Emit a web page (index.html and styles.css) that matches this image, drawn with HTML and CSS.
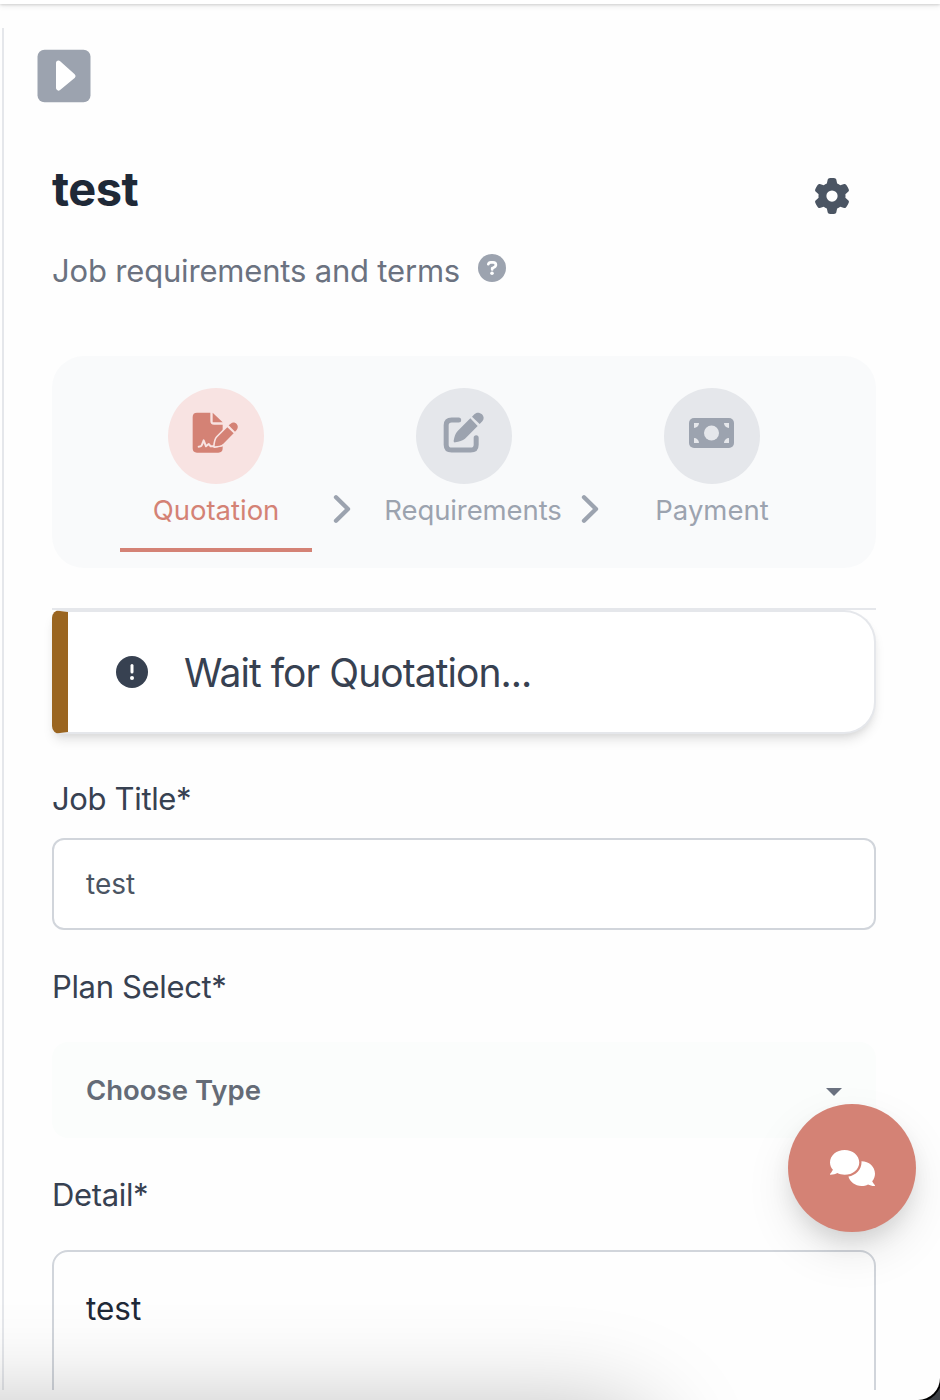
FILE: index.html
```html
<!DOCTYPE html>
<html lang="en">
<head>
<meta charset="utf-8">
<title>Job</title>
<link rel="stylesheet" href="styles.css">
</head>
<body>
<div class="window">
  <header class="topbar"></header>
  <main class="panel">
    <button class="toggle" aria-label="Open sidebar">
      <svg width="54" height="54" viewBox="0 0 54 54"><rect x=".5" y=".7" width="53" height="52.500" rx="7" fill="#9ca3af"/><path d="M21.500 14L36 27L21.500 39Z" fill="#fff" stroke="#fff" stroke-width="5" stroke-linejoin="round"/></svg>
    </button>
    <div class="content">
      <div class="heading">
        <h1 class="title">test</h1>
        <svg class="gear" width="36" height="36" viewBox="0 0 512 512"><path fill="#4b5563" d="M495.900 166.600c3.200 8.700 .5 18.400-6.400 24.600l-43.300 39.400c1.100 8.300 1.700 16.800 1.700 25.400s-.6 17.100-1.700 25.400l43.300 39.400c6.900 6.200 9.600 15.900 6.400 24.600c-4.400 11.900-9.700 23.300-15.800 34.300l-4.700 8.100c-6.600 11-14 21.400-22.100 31.200c-5.900 7.200-15.700 9.600-24.500 6.800l-55.700-17.700c-13.400 10.300-28.200 18.900-44 25.400l-12.500 57.100c-2 9.100-9 16.300-18.200 17.800c-13.800 2.300-28 3.500-42.500 3.500s-28.700-1.200-42.500-3.500c-9.200-1.500-16.200-8.700-18.200-17.800l-12.500-57.100c-15.800-6.500-30.600-15.100-44-25.400L83.100 425.900c-8.800 2.800-18.600 .3-24.500-6.800c-8.100-9.800-15.500-20.200-22.100-31.200l-4.700-8.100c-6.100-11-11.400-22.400-15.800-34.300c-3.200-8.700-.5-18.400 6.400-24.600l43.300-39.400C64.600 273.100 64 264.600 64 256s.6-17.100 1.700-25.400L22.400 191.200c-6.900-6.200-9.600-15.900-6.400-24.600c4.400-11.900 9.700-23.300 15.800-34.300l4.700-8.100c6.600-11 14-21.400 22.100-31.200c5.900-7.200 15.700-9.600 24.500-6.800l55.700 17.700c13.400-10.300 28.200-18.900 44-25.400l12.500-57.100c2-9.100 9-16.300 18.200-17.800C227.300 1.200 241.500 0 256 0s28.700 1.200 42.500 3.500c9.200 1.500 16.200 8.700 18.200 17.800l12.500 57.100c15.800 6.500 30.600 15.100 44 25.400l55.700-17.700c8.800-2.800 18.600-.3 24.500 6.800c8.100 9.800 15.500 20.200 22.100 31.200l4.700 8.100c6.100 11 11.400 22.400 15.800 34.300zM256 336a80 80 0 1 0 0-160 80 80 0 1 0 0 160z"/></svg>
      </div>
      <div class="subtitle">
        <span class="subtitle-text">Job requirements and terms</span>
        <svg width="28" height="28" viewBox="0 0 28 28"><circle cx="14" cy="14" r="14" fill="#9ca3af"/><path d="M10.300 10.200C10.600 8.900 11.600 8.300 12.800 8.300H15C16.700 8.300 17.900 9.300 17.900 10.900C17.900 12.600 16.200 13.200 14.200 14.300V15.400" fill="none" stroke="#fff" stroke-width="2.700" stroke-linecap="round" stroke-linejoin="round"/><circle cx="14" cy="19.300" r="1.800" fill="#fff"/></svg>
      </div>

      <nav class="steps">
        <div class="step active">
          <span class="disc">
            <svg width="48" height="42" viewBox="247 127 144 126"><path fill="#d48275" d="M262 129H302V154Q302 165 313 165H339V236Q339 249 326 249H262Q249 249 249 236V142Q249 129 262 129ZM309 129L339 158H309Z"/><path fill="none" stroke="#f8e3e2" stroke-width="6" stroke-linejoin="round" stroke-linecap="round" d="M267 231C277 231 276 227 282 212L289 230L297 223L303 230H321L341 227"/><path fill="#d48275" stroke="#f8e3e2" stroke-width="10" stroke-linejoin="round" paint-order="stroke" d="M353 173L323 203C318 208 316 219 315 230C326 228 334 229 341 222L372 191Z"/><path fill="#d48275" d="M357 167L363 162C368 157 376 157 381 163C386 168 385 176 381 181L376 186Z"/></svg>
          </span>
          <span class="name">Quotation</span>
        </div>
        <svg class="chevron" width="20" height="32" viewBox="0 0 20 32"><path d="M4 4.200L16 16L4 27.800" fill="none" stroke="#9ca3af" stroke-width="4.300" stroke-linecap="round" stroke-linejoin="round"/></svg>
        <div class="step">
          <span class="disc">
            <svg class="edit" width="42" height="42" viewBox="220 127 126 126"><path fill="none" stroke="#9ca3af" stroke-width="15" stroke-linecap="round" d="M267 151H246Q229.500 151 229.500 167V225Q229.500 241 246 241H303Q319.500 241 319.500 225V204"/><path fill="#9ca3af" d="M302 146L264 184C257 191 254 202 252 213Q251 219 257 218C268 216 279 213 286 207L324 169ZM307 141L314 134C320 127 330 128 337 134C343 140 344 149 338 155L330 163Z"/></svg>
          </span>
          <span class="name wide">Requirements</span>
        </div>
        <svg class="chevron" width="20" height="32" viewBox="0 0 20 32"><path d="M4 4.200L16 16L4 27.800" fill="none" stroke="#9ca3af" stroke-width="4.300" stroke-linecap="round" stroke-linejoin="round"/></svg>
        <div class="step">
          <span class="disc">
            <svg class="bill" width="45" height="30" viewBox="0 0 45 30"><rect width="45" height="30" rx="5" fill="#9ca3af"/><circle cx="22.500" cy="15" r="7.500" fill="#e5e7eb"/><path fill="#e5e7eb" d="M5 5H10A5 5 0 0 1 5 10ZM40 5V10A5 5 0 0 1 35 5ZM5 25V20A5 5 0 0 1 10 25ZM40 25H35A5 5 0 0 1 40 20Z"/></svg>
          </span>
          <span class="name">Payment</span>
        </div>
      </nav>

      <section class="notice-wrap">
        <div class="notice">
          <svg width="32" height="32" viewBox="0 0 32 32"><circle cx="16" cy="16" r="16" fill="#374151"/><path d="M16 9.500V16" stroke="#fff" stroke-width="3" stroke-linecap="round"/><circle cx="16" cy="22" r="2" fill="#fff"/></svg>
          <span class="notice-text">Wait for Quotation...</span>
        </div>
      </section>

      <form class="form">
        <label class="label">Job Title*</label>
        <div class="input">test</div>
        <label class="label next">Plan Select*</label>
        <div class="select"><span>Choose Type</span><svg class="caret" width="16" height="8" viewBox="0 0 16 8"><path d="M0 0H16L8 8Z" fill="#6b7280"/></svg></div>
        <label class="label next">Detail*</label>
        <div class="textarea">test</div>
      </form>
    </div>
  </main>
  <button class="chat" aria-label="Chat"><svg width="45" height="36" viewBox="0 0 640 512"><path fill="#fff" d="M416 176C416 78.800 322.900 0 208 0S0 78.800 0 176c0 39.570 15.620 75.960 41.670 105.400c-16.390 32.760-39.230 57.320-39.590 57.680c-2.100 2.205-2.670 5.475-1.441 8.354C1.900 350.300 4.602 352 7.660 352c38.350 0 70.760-11.120 95.740-24.040C134.200 343.100 169.800 352 208 352C322.900 352 416 273.200 416 176zM599.600 443.700C624.800 413.900 640 376.600 640 336C640 238.800 554 160 448 160c-.3145 0-.6191 .041-.9336 .043C447.500 165.300 448 170.600 448 176c0 98.620-79.680 181.200-186.100 202.500C282.700 455.100 357.100 512 448 512c33.690 0 65.320-8.008 92.850-21.980C565.200 502 596.100 512 632.300 512c3.059 0 5.760-1.725 7.020-4.605c1.229-2.879 .6582-6.148-1.441-8.354C637.600 498.700 615.900 475.300 599.600 443.700z"/></svg></button>
  <div class="bottom-shade"></div>
</div>
</body>
</html>
```
FILE: styles.css
```css
* { box-sizing: border-box; }
html, body { margin: 0; height: 1400px; overflow: hidden; }
body { background: #3b3f44; font-family: Inter, "Liberation Sans", sans-serif; font-weight: 400; color: #374151; }
svg { display: block; flex: none; }
button { border: 0; padding: 0; background: none; }

.window {
  position: relative;
  height: 1400px;
  overflow: hidden;
  background: #fefefe;
  border-radius: 0 0 22px 0;
  box-shadow: 0 0 0 2px #000;
}
.topbar { height: 4px; background: #fff; box-shadow: 0 1px 3px rgba(0,0,0,.16), 0 2px 6px rgba(0,0,0,.08); }
.panel {
  height: 1362px;
  margin: 24px 0 0 2px;
  padding: 21px 64px 0 33px;
  border-left: 2px solid #e5e7eb;
  overflow: hidden;
}
.toggle { display: block; width: 54px; height: 54px; }
.content { padding-left: 15px; width: 839px; }

.heading { display: flex; justify-content: space-between; margin-top: 55px; height: 64px; padding-right: 26px; }
.title { margin: -1px 0 0; font-size: 47px; line-height: 64px; font-weight: 750; color: #1f2937; letter-spacing: -.5px; }
.gear { margin-top: 20px; }
.subtitle { display: flex; align-items: flex-start; gap: 18px; height: 48px; margin-top: 25px; color: #6b7280; }
.subtitle-text { width: 408px; font-size: 31px; line-height: 48px; white-space: nowrap; letter-spacing: -.18px; }
.subtitle svg { margin-top: 7px; }

.steps {
  display: flex;
  height: 212px;
  margin-top: 61px;
  padding: 32px 0 0 68px;
  background: #f9fafb;
  border-radius: 32px;
}
.step { width: 192px; height: 164px; display: flex; flex-direction: column; align-items: center; color: #9ca3af; }
.step.active { color: #d48275; border-bottom: 4px solid #d48275; }
.disc { width: 96px; height: 96px; border-radius: 50%; background: #e5e7eb; display: flex; justify-content: center; padding-top: 24px; }
.active .disc { background: #f8e3e2; }
.edit { margin-right: 1px; }
.bill { margin: 6px 1px 0 0; }
.name { height: 40px; margin-top: 6px; font-size: 27.5px; line-height: 40px; white-space: nowrap; }
.name.wide { padding-left: 18px; letter-spacing: -.1px; }
.chevron { margin: 105px 16px 0 20px; }

.notice-wrap { margin-top: 40px; border-top: 2px solid #e5e7eb; }
.notice {
  display: flex;
  align-items: center;
  height: 124px;
  gap: 36px;
  padding-left: 48px;
  background: #fff;
  border: 2px solid #e5e7eb;
  border-left: 16px solid #9a6520;
  border-radius: 8px 32px 32px 8px;
  box-shadow: 0 8px 12px -2px rgba(0,0,0,.1), 0 4px 8px -4px rgba(0,0,0,.1);
}
.notice-text { padding-top: 2px; font-size: 39px; line-height: 56px; letter-spacing: -.95px; white-space: nowrap; }

.form { margin-top: 40px; }
.label { display: block; height: 48px; padding-top: 1px; line-height: 48px; font-size: 31px; letter-spacing: -.35px; white-space: nowrap; }
.label.next { margin-top: 32px; }
.input { height: 92px; margin-top: 16px; padding: 0 32px; border: 2px solid #d1d5db; border-radius: 12px; background: #fff; font-size: 28px; line-height: 88px; color: #4b5563; }
.select { display: flex; align-items: center; justify-content: space-between; height: 96px; margin-top: 32px; padding: 0 34px; border-radius: 16px; background: #fbfdfc; font-size: 27.5px; font-weight: 600; color: #646b76; }
.caret { margin-top: 3px; }
.textarea { height: 200px; margin-top: 32px; padding: 33px 32px; border: 2px solid #d1d5db; border-radius: 16px; font-size: 31.5px; line-height: 48px; color: #1f2937; }

.chat {
  position: absolute;
  left: 788px;
  top: 1104px;
  width: 128px;
  height: 128px;
  display: flex;
  align-items: center;
  justify-content: center;
  border-radius: 50%;
  background: #d48275;
  box-shadow: 0 20px 50px -6px rgba(0,0,0,.13), 0 12px 24px -6px rgba(0,0,0,.12);
}
.bottom-shade {
  position: absolute;
  left: -200px;
  top: 1410px;
  width: 855px;
  height: 300px;
  border-radius: 60px;
  box-shadow: 0 0 100px 0 rgba(0,0,0,.27);
}
```
